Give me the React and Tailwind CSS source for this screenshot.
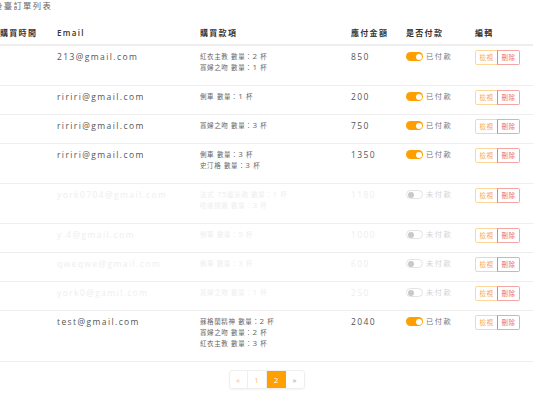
import React from "react";

const orders = [
  { email: "213@gmail.com", items: ["紅衣主教 數量：2 杯", "寡婦之吻 數量：1 杯"], total: 850, paid: true },
  { email: "ririri@gmail.com", items: ["側車 數量：1 杯"], total: 200, paid: true },
  { email: "ririri@gmail.com", items: ["寡婦之吻 數量：3 杯"], total: 750, paid: true },
  { email: "ririri@gmail.com", items: ["側車 數量：3 杯", "史汀格 數量：3 杯"], total: 1350, paid: true },
  { email: "york0704@gmail.com", items: ["法式 75釐米砲 數量：1 杯", "哈維撞牆 數量：3 杯"], total: 1180, paid: false },
  { email: "y.4@gmail.com", items: ["側車 數量：5 杯"], total: 1000, paid: false },
  { email: "qweqwe@gmail.com", items: ["側車 數量：3 杯"], total: 600, paid: false },
  { email: "york0@gamil.com", items: ["寡婦之吻 數量：1 杯"], total: 250, paid: false },
  { email: "test@gmail.com", items: ["蘇格蘭精神 數量：2 杯", "寡婦之吻 數量：2 杯", "紅衣主教 數量：3 杯"], total: 2040, paid: true },
];

// CJK glyphs render smaller than latin in the item column
function ItemText({ text }) {
  const parts = text.split(/([\u3000-\u9fff\uff00-\uffef]+)/);
  return (
    <div className="whitespace-nowrap h-[11px] leading-[10px] tracking-[0.6px]">
      {parts.map((p, i) =>
        /[\u3000-\u9fff\uff00-\uffef]/.test(p) ? (
          <span key={i} className="text-[6.5px] leading-[6px]">{p}</span>
        ) : (
          <span key={i} className="text-[8px] leading-[6px]">{p}</span>
        )
      )}
    </div>
  );
}

function Toggle({ on }) {
  if (on) {
    return (
      <span className="inline-flex items-center justify-end w-[17px] h-[9px] rounded-full bg-[#ff9f00] pr-[1.5px]">
        <span className="w-[6px] h-[6px] rounded-full bg-white" />
      </span>
    );
  }
  return (
    <span className="inline-flex items-center w-[17px] h-[9px] rounded-full border border-[#e3e3e3] bg-white pl-[1px]">
      <span className="w-[6px] h-[6px] rounded-full bg-[#c9c9c9]" />
    </span>
  );
}

function App() {
  const cell = "align-top pt-[5px] pb-[12px] px-[6px]";
  return (
    <div
      className="w-[533px] h-[403px] overflow-hidden bg-white"
      style={{ fontFamily: '"Open Sans", "Noto Sans CJK TC", sans-serif' }}
    >
      <div className="-ml-[6px] w-[539px]">
        <h1 className="text-[8.3px] leading-[12px] tracking-[1.4px] text-[#666] font-normal">後臺訂單列表</h1>

        <table className="mt-[8px] w-full border-collapse tracking-[1.4px]">
          <thead>
            <tr className="border-b-2 border-[#eeeeee] text-[#333] text-[8px] leading-[12px] tracking-[1.3px] text-left">
              <th className="w-[57px] pt-[7px] pb-[5px] px-[6px] font-semibold">購買時間</th>
              <th className="w-[143px] pt-[7px] pb-[5px] px-[6px] font-semibold">Email</th>
              <th className="w-[151px] pt-[7px] pb-[5px] px-[6px] font-semibold">購買款項</th>
              <th className="w-[55px] pt-[7px] pb-[5px] px-[6px] font-semibold">應付金額</th>
              <th className="w-[69px] pt-[7px] pb-[5px] px-[6px] font-semibold">是否付款</th>
              <th className="pt-[7px] pb-[5px] px-[6px] font-semibold">編輯</th>
            </tr>
          </thead>
          <tbody>
            {orders.map((o, idx) => {
              const faded = !o.paid;
              return (
                <tr key={idx} className="border-b border-[#eeeeee] text-[8.5px] leading-[11px]">
                  <td className={cell}></td>
                  <td className={`${cell} ${faded ? "text-[#eeeeee]" : "text-[#555]"}`}>
                    <div className="h-[11px] whitespace-nowrap">{o.email}</div>
                  </td>
                  <td className={`${cell} ${faded ? "text-[#eeeeee]" : "text-[#666]"}`}>
                    {o.items.map((it, i) => (
                      <ItemText key={i} text={it} />
                    ))}
                  </td>
                  <td className={`${cell} ${faded ? "text-[#eeeeee]" : "text-[#555]"}`}>
                    <div className="h-[11px]">{o.total}</div>
                  </td>
                  <td className={cell}>
                    <div className="flex items-center gap-[3px] h-[11px]">
                      <Toggle on={o.paid} />
                      <span className={`text-[7.3px] ${faded ? "text-[#d4d4d4]" : "text-[#777]"}`}>
                        {o.paid ? "已付款" : "未付款"}
                      </span>
                    </div>
                  </td>
                  <td className={cell}>
                    <div className="-mt-[1px] -mb-[3px] flex text-[6.5px] leading-[13px] tracking-[0.5px]">
                      <button className="w-[23px] h-[15px] border border-[#ffd69a] rounded-l-[2px] text-[#f6a24a]">檢視</button>
                      <button className="w-[23px] h-[15px] border border-[#f4a6a6] border-l-[#ef7f7f] rounded-r-[2px] -ml-[1px] text-[#e86f6f]">刪除</button>
                    </div>
                  </td>
                </tr>
              );
            })}
          </tbody>
        </table>
      </div>

      <div className="flex justify-center mt-[8px]">
        <div className="flex h-[19px] rounded-[3px] border border-[#efefef] shadow-[0_1px_2px_rgba(0,0,0,0.05)] overflow-hidden text-[8px] leading-[17px]">
          <span className="w-[18px] text-center text-[#f5b8a6] border-r border-[#efefef]">«</span>
          <span className="w-[19px] text-center text-[#f5c48f] border-r border-[#efefef]">1</span>
          <span className="w-[19px] text-center text-white bg-[#ff9f00]">2</span>
          <span className="w-[18px] text-center text-[#9ea3c4]">»</span>
        </div>
      </div>
    </div>
  );
}

export default App;
